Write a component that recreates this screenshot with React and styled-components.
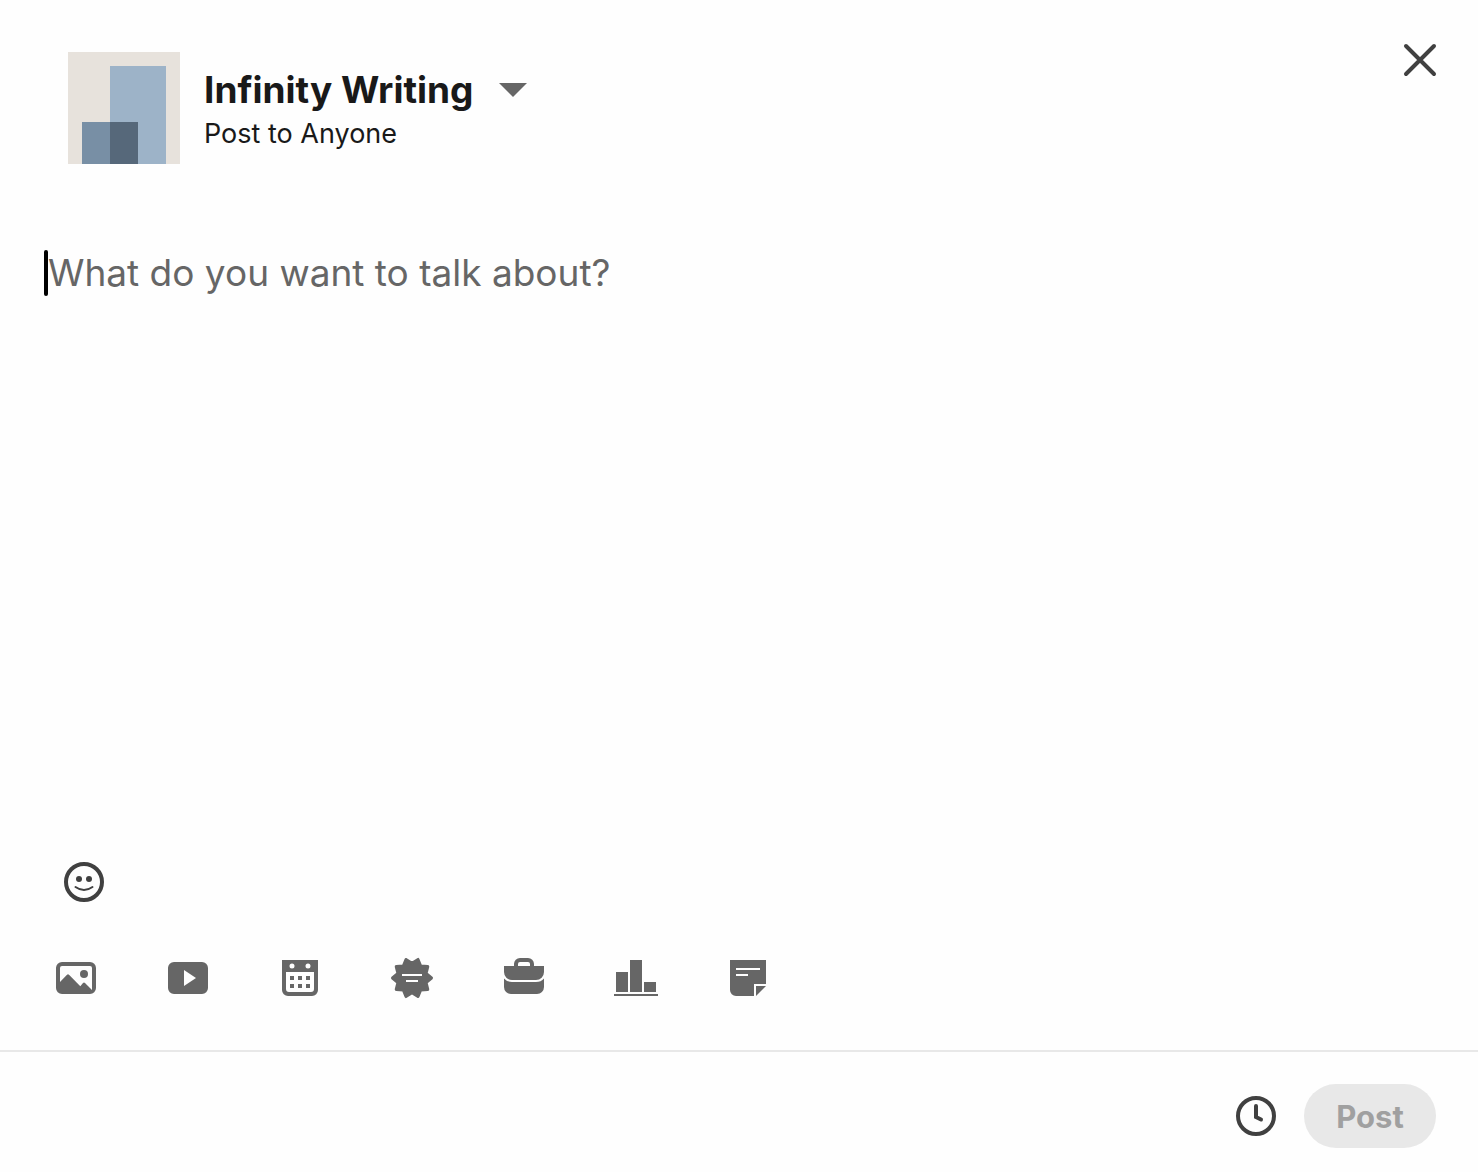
import React from "react";
import styled, { createGlobalStyle } from "styled-components";

const GlobalStyle = createGlobalStyle`
  * {
    box-sizing: border-box;
  }
  body {
    margin: 0;
    background: #fefefe;
    font-family: Inter, "Liberation Sans", sans-serif;
  }
  button, textarea {
    font-family: inherit;
  }
`;

const badgePoints = Array.from({ length: 20 }, (_, i) => {
  const angle = (i * Math.PI) / 10;
  const r = i % 2 === 0 ? 19.5 : 14.8;
  return `${(24 + r * Math.cos(angle)).toFixed(2)},${(24 + r * Math.sin(angle)).toFixed(2)}`;
}).join(" ");

const tools = [
  {
    label: "Add a photo",
    icon: (
      <>
        <path
          fillRule="evenodd"
          d="M10 8h28a6 6 0 0 1 6 6v20a6 6 0 0 1-6 6H10a6 6 0 0 1-6-6V14a6 6 0 0 1 6-6zM10 12a2 2 0 0 0-2 2v14l7-7.200q1-1 2 0L28.300 32.200l2.700-3.200q1-1 2 0l7 7V14a2 2 0 0 0-2-2z"
        />
        <circle cx="32" cy="20" r="4" />
      </>
    ),
  },
  {
    label: "Add a video",
    icon: (
      <path
        fillRule="evenodd"
        d="M10 8h28a6 6 0 0 1 6 6v20a6 6 0 0 1-6 6H10a6 6 0 0 1-6-6V14a6 6 0 0 1 6-6zM20 16v16l12-8z"
      />
    ),
  },
  {
    label: "Create an event",
    icon: (
      <>
        <path
          fillRule="evenodd"
          d="M6 6h36v30a6 6 0 0 1-6 6H12a6 6 0 0 1-6-6zM10 18v17a3 3 0 0 0 3 3h22a3 3 0 0 0 3-3V18zM13.500 12a2.500 2.500 0 1 0 5 0a2.500 2.500 0 1 0-5 0M29.500 12a2.500 2.500 0 1 0 5 0a2.500 2.500 0 1 0-5 0"
        />
        <path d="M14 22h4v4h-4zM22 22h4v4h-4zM30 22h4v4h-4zM14 30h4v4h-4zM22 30h4v4h-4zM30 30h4v4h-4z" />
      </>
    ),
  },
  {
    label: "Celebrate an occasion",
    icon: (
      <>
        <polygon points={badgePoints} stroke="currentColor" strokeWidth="3" strokeLinejoin="round" />
        <path d="M14 20h20v2H14zM18 26h12v2H18z" fill="#fefefe" />
      </>
    ),
  },
  {
    label: "Share that you are hiring",
    icon: (
      <>
        <path
          fillRule="evenodd"
          d="M4 12h10v-2a6 6 0 0 1 6-6h8a6 6 0 0 1 6 6v2h10v6a8 8 0 0 1-8 8H12a8 8 0 0 1-8-8zM18 12h12v-2a2 2 0 0 0-2-2h-8a2 2 0 0 0-2 2z"
        />
        <path d="M4 24.500Q7 28 12 28h24q5 0 8-3.500V33a7 7 0 0 1-7 7H11a7 7 0 0 1-7-7z" />
      </>
    ),
  },
  {
    label: "Create a poll",
    icon: <path d="M4 18h12v20H4zM18 6h12v32H18zM32 28h12v10H32zM2 40h44v2H2z" />,
  },
  {
    label: "Add a document",
    icon: (
      <>
        <path
          fillRule="evenodd"
          d="M6 6h36v24H30v12H12a6 6 0 0 1-6-6zM12 14v2h24v-2zM12 20v2h12v-2z"
        />
        <path d="M32 32h10L32 42z" />
      </>
    ),
  },
];

function App() {
  return (
    <>
      <GlobalStyle />
      <Composer>
        <Header>
          <Identity type="button" aria-haspopup="dialog">
            <Avatar viewBox="0 0 112 112" aria-hidden="true">
              <path fill="#e7e2dc" d="M0 0h112v112H0z" />
              <path fill="#9db3c8" d="M42 14h56v98H42z" />
              <path fill="#788fa5" d="M14 70h28v42H14z" />
              <path fill="#56687a" d="M42 70h28v42H42z" />
            </Avatar>
            <IdentityText>
              <Name>
                Infinity Writing
                <Chevron viewBox="0 0 28 14" aria-hidden="true">
                  <path d="M0 0h28L14 14z" />
                </Chevron>
              </Name>
              <Audience>Post to Anyone</Audience>
            </IdentityText>
          </Identity>
          <IconButton type="button" aria-label="Dismiss">
            <Icon viewBox="0 0 48 48">
              <path d="M10 10l28 28M38 10L10 38" fill="none" stroke="currentColor" strokeWidth="4" strokeLinecap="round" />
            </Icon>
          </IconButton>
        </Header>

        <Editor>
          <Caret />
          <TextArea aria-label="Post text" placeholder="What do you want to talk about?" />
        </Editor>

        <EmojiRow>
          <IconButton type="button" aria-label="Open emoji keyboard">
            <Icon viewBox="0 0 48 48">
              <circle cx="24" cy="24" r="18" fill="none" stroke="currentColor" strokeWidth="4" />
              <circle cx="19" cy="21" r="3" />
              <circle cx="29" cy="21" r="3" />
              <path d="M15.500 29Q24 35 32.500 29" fill="none" stroke="currentColor" strokeWidth="2" strokeLinecap="round" />
            </Icon>
          </IconButton>
        </EmojiRow>

        <Toolbar>
          {tools.map((tool) => (
            <IconButton key={tool.label} type="button" aria-label={tool.label} $muted>
              <Icon viewBox="0 0 48 48">{tool.icon}</Icon>
            </IconButton>
          ))}
        </Toolbar>

        <Footer>
          <IconButton type="button" aria-label="Schedule post">
            <Icon viewBox="0 0 48 48">
              <circle cx="24" cy="24" r="18" fill="none" stroke="currentColor" strokeWidth="4" />
              <path d="M24 14v11l5 2.500" fill="none" stroke="currentColor" strokeWidth="4" strokeLinecap="round" />
            </Icon>
          </IconButton>
          <PostButton type="submit" disabled>
            Post
          </PostButton>
        </Footer>
      </Composer>
    </>
  );
}

const Composer = styled.main`
  display: flex;
  flex-direction: column;
  min-height: 100vh;
`;

const Header = styled.header`
  display: flex;
  align-items: flex-start;
  justify-content: space-between;
  padding: 36px 34px 0 52px;
`;

const Identity = styled.button`
  display: flex;
  align-items: center;
  gap: 24px;
  padding: 16px;
  border: 0;
  background: none;
  color: #191919;
  text-align: left;
  cursor: pointer;
`;

const Avatar = styled.svg`
  width: 112px;
  height: 112px;
  flex: none;
`;

const IdentityText = styled.span`
  display: flex;
  flex-direction: column;
  padding-top: 4px;
`;

const Name = styled.span`
  display: flex;
  align-items: center;
  gap: 26px;
  font-size: 37px;
  font-weight: 700;
  line-height: 48px;
`;

const Chevron = styled.svg`
  width: 28px;
  height: 14px;
  fill: #666;
`;

const Audience = styled.span`
  font-size: 27px;
  line-height: 40px;
`;

const IconButton = styled.button`
  display: flex;
  padding: 0;
  border: 0;
  background: none;
  color: ${(props) => (props.$muted ? "#666" : "#404040")};
  cursor: pointer;
`;

const Icon = styled.svg`
  width: 48px;
  height: 48px;
  fill: currentColor;
`;

const Editor = styled.div`
  display: flex;
  flex: 1;
  padding: 70px 44px 24px;
`;

const Caret = styled.span`
  width: 4px;
  height: 46px;
  border-radius: 2px;
  background: #000;
`;

const TextArea = styled.textarea`
  flex: 1;
  padding: 0;
  border: 0;
  outline: 0;
  resize: none;
  background: none;
  color: #191919;
  caret-color: transparent;
  font-size: 37px;
  line-height: 46px;

  &::placeholder {
    color: #666;
    opacity: 1;
  }
`;

const EmojiRow = styled.div`
  display: flex;
  padding: 0 60px;
`;

const Toolbar = styled.div`
  display: flex;
  gap: 64px;
  padding: 48px 52px;
`;

const Footer = styled.footer`
  display: flex;
  align-items: center;
  justify-content: flex-end;
  gap: 24px;
  padding: 32px 42px 24px;
  border-top: 2px solid #e8e8e8;
`;

const PostButton = styled.button`
  width: 132px;
  height: 64px;
  padding: 0;
  border: 0;
  border-radius: 32px;
  background: #e8e8e8;
  color: #a0a0a0;
  font-size: 31px;
  font-weight: 700;
`;

export default App;
